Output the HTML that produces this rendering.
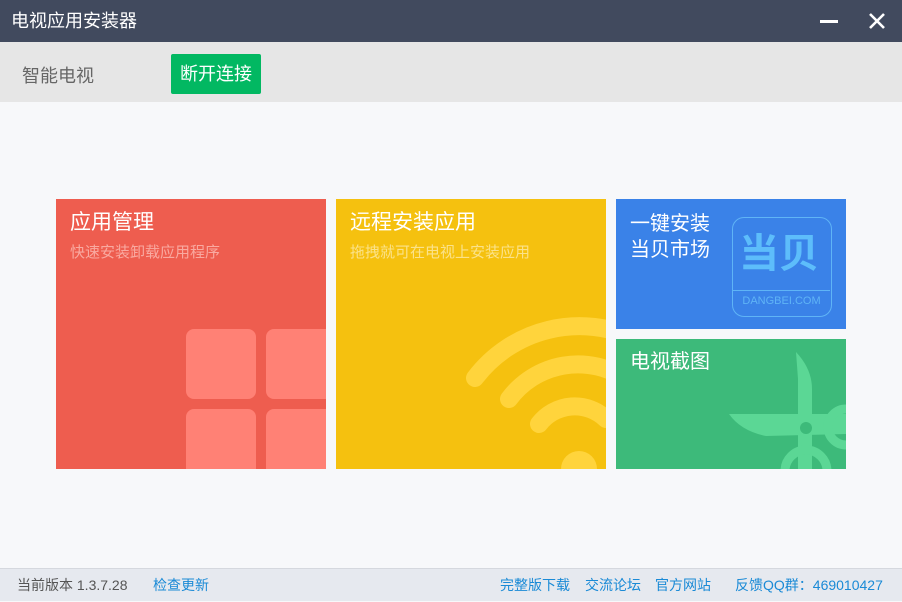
<!DOCTYPE html>
<html><head><meta charset="utf-8"><style>
*{margin:0;padding:0;box-sizing:border-box}
body{width:902px;height:601px;overflow:hidden;background:#f7f8fa;font-family:"Liberation Sans","Noto Sans CJK SC",sans-serif;position:relative}
.title{position:absolute;left:0;top:0;width:902px;height:42px;background:#414a5e;color:#fff;font-size:18px;line-height:42px;padding-left:11px}
.bar{position:absolute;left:0;top:42px;width:902px;height:60px;background:#e6e6e6}
.tile{position:absolute;overflow:hidden;color:#fff}
.tile h2{position:absolute;left:14px;top:11px;font-size:21px;font-weight:normal;line-height:26px}
.tile p{position:absolute;left:14px;top:42px;font-size:15px}
.foot{position:absolute;left:0;top:568px;width:902px;height:33px;background:#e6e9ef;border-top:1px solid #d5d8de;font-size:14px;line-height:33px}
.foot span{position:absolute;color:#1a8ad6}
</style></head><body>
<div class="title">电视应用安装器
<div style="position:absolute;left:820px;top:20px;width:18px;height:3px;background:#fff"></div>
<svg style="position:absolute;left:868px;top:12px" width="18" height="18"><path d="M2 2L16 16M16 2L2 16" stroke="#fff" stroke-width="2.6"/></svg>
</div>
<div class="bar">
<div style="position:absolute;left:22px;top:20px;font-size:18px;color:#666">智能电视</div>
<div style="position:absolute;left:171px;top:12px;width:90px;height:40px;background:#02b862;border-radius:2px;color:#fff;font-size:18px;line-height:40px;text-align:center">断开连接</div>
</div>
<div class="tile" style="left:56px;top:199px;width:270px;height:270px;background:#ee5d4f">
<h2>应用管理</h2><p style="color:#f9a9a0">快速安装卸载应用程序</p>
<div style="position:absolute;left:130px;top:130px;width:70px;height:70px;background:#ff8175;border-radius:8px"></div>
<div style="position:absolute;left:210px;top:130px;width:70px;height:70px;background:#ff8175;border-radius:8px"></div>
<div style="position:absolute;left:130px;top:210px;width:70px;height:70px;background:#ff8175;border-radius:8px"></div>
<div style="position:absolute;left:210px;top:210px;width:70px;height:70px;background:#ff8175;border-radius:8px"></div>
</div>
<div class="tile" style="left:336px;top:199px;width:270px;height:270px;background:#f5c10f">
<h2>远程安装应用</h2><p style="color:#fbe28a">拖拽就可在电视上安装应用</p>
<svg style="position:absolute;left:0;top:0" width="270" height="270"><g fill="none" stroke="#ffd43c" stroke-width="18" stroke-linecap="round">
<path d="M203 225A45 45 0 0 1 270 220"/>
<path d="M173 200A86 86 0 0 1 290 180"/>
<path d="M139 179A131 131 0 0 1 300 140"/></g>
<circle cx="243" cy="270" r="18" fill="#ffd43c"/></svg>
</div>
<div class="tile" style="left:616px;top:199px;width:230px;height:130px;background:#3a82e8">
<h2 style="top:12px;font-size:20px;line-height:26px">一键安装<br>当贝市场</h2>
<div style="position:absolute;left:116px;top:18px;width:100px;height:100px;border:1.5px solid #5fb4f6;border-radius:12px">
<div style="position:absolute;left:6px;top:14px;font-size:40px;font-weight:bold;color:#5dbdfb;line-height:44px">当贝</div>
<div style="position:absolute;left:0;top:72px;width:97px;border-top:1.5px solid #5fb4f6"></div>
<div style="position:absolute;left:0;top:77px;width:97px;text-align:center;font-size:11px;color:#5fb4f6">DANGBEI.COM</div>
</div>
</div>
<div class="tile" style="left:616px;top:339px;width:230px;height:130px;background:#3dba7a">
<h2 style="top:10px;font-size:20px">电视截图</h2>
<svg style="position:absolute;left:0;top:0" width="230" height="130"><g fill="#5bd795">
<path d="M180 13Q196 30 196 50L196 130L182 130L182 40Z"/>
<path d="M113 75L230 75L230 95L150 97Q125 92 113 75Z"/>
</g>
<g fill="none" stroke="#5bd795" stroke-width="9"><circle cx="230" cy="88" r="18"/><circle cx="190" cy="132" r="21"/></g>
<circle cx="190" cy="89" r="6" fill="#3dba7a"/></svg>
</div>
<div class="foot">
<span style="left:17px;color:#555">当前版本 1.3.7.28</span>
<span style="left:153px">检查更新</span>
<span style="left:500px">完整版下载</span>
<span style="left:585px">交流论坛</span>
<span style="left:655px">官方网站</span>
<span style="left:735px">反馈QQ群：469010427</span>
</div>
</body></html>
